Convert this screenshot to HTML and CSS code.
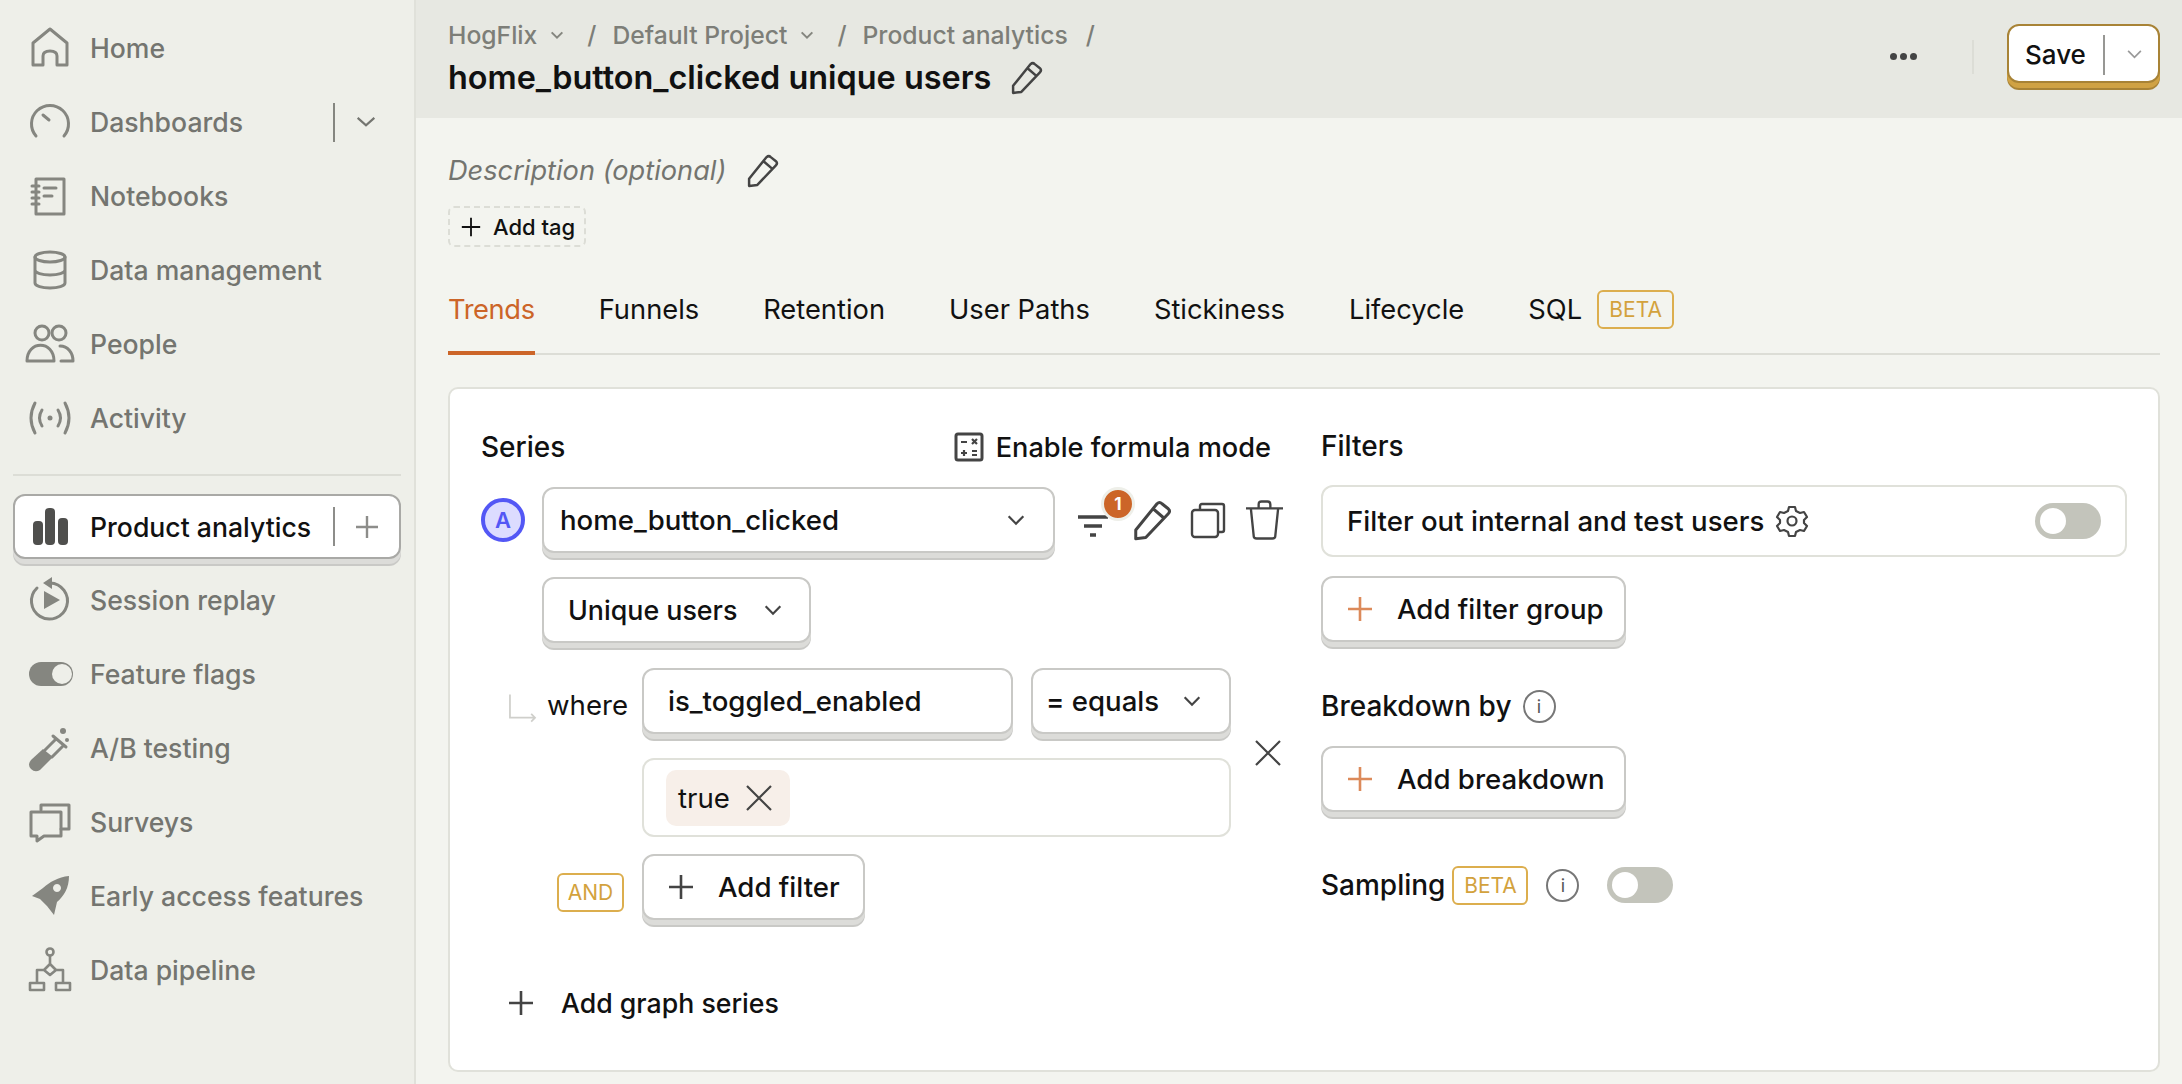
FILE: index.html
```html
<!DOCTYPE html>
<html lang="en">
<head>
    <meta charset="UTF-8">
    <title>home_button_clicked unique users</title>
    <link rel="stylesheet" href="styles.css">
</head>
<body>
    <aside class="sidebar">
        <nav class="nav-group">
            <a class="nav-item"><svg class="nav-icon" viewBox="0 0 44 44"><path d="M5 39V17L22 3l17 14v22H29V30q0-5-7-5t-7 5v9z"/></svg>Home</a>
            <a class="nav-item"><svg class="nav-icon" viewBox="0 0 44 44"><path d="M8 36A18.5 18.5 0 1 1 36 36M15 15l6 5"/></svg>Dashboards<span class="nav-split"></span><svg class="nav-chevron" viewBox="0 0 24 24"><path d="M2 7l10 9 10-9"/></svg></a>
            <a class="nav-item"><svg class="nav-icon" viewBox="0 0 44 44"><path d="M8 5h28v35H8zM4 12h7M4 18h7M4 24h7M4 30h7M16 14h12M16 22h8"/></svg>Notebooks</a>
            <a class="nav-item"><svg class="nav-icon" viewBox="0 0 44 44"><ellipse cx="22" cy="9" rx="15" ry="5"/><path d="M7 9v26c0 3 7 5 15 5s15-2 15-5V9M7 22c0 3 7 5 15 5s15-2 15-5"/></svg>Data management</a>
            <a class="nav-item"><svg class="nav-icon" viewBox="0 0 44 44"><circle cx="14" cy="11" r="7"/><circle cx="31" cy="11" r="7"/><path d="M-1 39c0-21 27-21 27 0zM32 24c8 0 13 7 13 15H33"/></svg>People</a>
            <a class="nav-item"><svg class="nav-icon" viewBox="0 0 44 44"><path d="M14 14q-5 8 0 16M30 14q5 8 0 16M7 7q-8 15 0 30M37 7q8 15 0 30"/><circle class="fill" cx="22" cy="22" r="2.5"/></svg>Activity</a>
        </nav>
        <div class="nav-divider"></div>
        <a class="nav-active">
            <svg class="bars" viewBox="0 0 44 44"><rect x="5" y="16" width="10" height="24" rx="4"/><rect x="17" y="3" width="10" height="37" rx="4"/><rect x="30" y="13" width="10" height="27" rx="4"/></svg>
            Product analytics<span class="nav-split"></span>
            <svg class="nav-plus" viewBox="0 0 24 24"><path d="M12 1v22M1 12h22"/></svg>
        </a>
        <nav class="nav-group">
            <a class="nav-item"><svg class="nav-icon" viewBox="0 0 44 44"><path d="M22 5A18 18 0 1 1 9 10"/><path class="fill" d="M24-1l-9 6 9 6zM16 13l16 9-16 9z"/></svg>Session replay</a>
            <a class="nav-item"><svg class="nav-icon" viewBox="0 0 44 44"><rect class="fill" x="1" y="10" width="44" height="24" rx="12"/><circle class="knob" cx="34" cy="22" r="10"/></svg>Feature flags</a>
            <a class="nav-item"><svg class="nav-icon" viewBox="0 0 44 44"><path d="M25 10L38 21M28 13L17 24M35 20L24 31"/><path class="fill" d="M15 23L25 31 12 44q-5 3-9-1t0-9z"/><circle class="fill" cx="35" cy="5" r="3"/><circle class="fill" cx="39" cy="14" r="2"/></svg>A/B testing</a>
            <a class="nav-item"><svg class="nav-icon" viewBox="0 0 44 44"><path d="M13 10V5h28v24h-8"/><path d="M3 12h30v24H16l-7 5v-5H3z"/></svg>Surveys</a>
            <a class="nav-item"><svg class="nav-icon" viewBox="0 0 44 44"><path class="fill" fill-rule="evenodd" d="M41 2c0 12-5 20-12 26l-3 13-7-9-7-7-8-3 11-8C22 8 30 3 41 2zM29 10a4 4 0 1 0 .01 0z"/></svg>Early access features</a>
            <a class="nav-item"><svg class="nav-icon thin" viewBox="0 0 44 44"><circle cx="22" cy="4" r="3.5"/><path d="M22 8v8l-6 6 6 5 6-5-6-6M16 22H9v13M28 22h7v13M2 35h14v7H2zM28 35h14v7H28z"/></svg>Data pipeline</a>
        </nav>
    </aside>

    <main class="main">
        <header class="top-bar">
            <div>
                <div class="crumbs">
                    <span>HogFlix</span><svg class="crumb-chev" viewBox="0 0 24 24"><path d="M4 8l8 8 8-8"/></svg>
                    <span class="slash">/</span>
                    <span>Default Project</span><svg class="crumb-chev" viewBox="0 0 24 24"><path d="M4 8l8 8 8-8"/></svg>
                    <span class="slash">/</span>
                    <span>Product analytics</span>
                    <span class="slash last">/</span>
                </div>
                <h1 class="title">home_button_clicked unique users <svg class="pencil" viewBox="0 0 32 32"><path d="M3 24L20 3q2-2 4 0l5 4q2 2 0 4L11 30l-8 1zM17 7l8 7"/></svg></h1>
            </div>
            <div class="top-actions">
                <div class="dots"><i></i><i></i><i></i></div>
                <div class="top-sep"></div>
                <div class="save-btn">Save<span class="save-split"></span><svg class="save-chev" viewBox="0 0 24 24"><path d="M3 7l9 9 9-9"/></svg></div>
            </div>
        </header>

        <div class="content">
            <div class="desc">Description (optional) <svg class="pencil" viewBox="0 0 32 32"><path d="M3 24L20 3q2-2 4 0l5 4q2 2 0 4L11 30l-8 1zM17 7l8 7"/></svg></div>
            <div class="add-tag"><svg class="tag-plus" viewBox="0 0 24 24"><path d="M12 2v20M2 12h20"/></svg>Add tag</div>

            <div class="tabs">
                <span class="tab active">Trends</span>
                <span class="tab">Funnels</span>
                <span class="tab">Retention</span>
                <span class="tab">User Paths</span>
                <span class="tab">Stickiness</span>
                <span class="tab">Lifecycle</span>
                <span class="tab">SQL <em class="beta">BETA</em></span>
            </div>

            <section class="card">
                <div class="col-left">
                    <div class="series-head">
                        <span class="label">Series</span>
                        <span class="formula"><svg class="calc" viewBox="0 0 30 30"><rect x="2" y="2" width="26" height="26" rx="2"/><path d="M7 10h6M18 7l5 5M23 7l-5 5M7 21h6M10 18v6M18 19h5M18 23h5"/></svg>Enable formula mode</span>
                    </div>
                    <div class="row series-row">
                        <span class="letter">A</span>
                        <div class="btn event-select">home_button_clicked<svg class="chev" viewBox="0 0 24 24"><path d="M4 8l8 8 8-8"/></svg></div>
                        <div class="series-tools">
                            <span class="filter-tool"><svg class="tool-filter" viewBox="0 0 30 24"><path d="M0 3h30M6 12h18M12 21h6"/></svg><b class="badge">1</b></span>
                            <svg class="tool tool-pencil" viewBox="0 0 32 32"><path d="M3 24L20 3q2-2 4 0l5 4q2 2 0 4L11 30l-8 1zM17 7l8 7"/></svg>
                            <svg class="tool tool-copy" viewBox="0 0 36 36"><path d="M10 7V4q0-2 2-2h20q2 0 2 2v24q0 2-2 2h-3"/><rect x="2" y="8" width="26" height="27" rx="3"/></svg>
                            <svg class="tool tool-trash" viewBox="0 0 40 40"><path d="M1 8h38M14 8V4q0-3 3-3h6q3 0 3 3v4M6 8l3 29q0 2 3 2h16q3 0 3-2l3-29"/></svg>
                        </div>
                    </div>
                    <div class="btn math-select">Unique users<svg class="chev" viewBox="0 0 24 24"><path d="M4 8l8 8 8-8"/></svg></div>

                    <div class="where-wrap">
                        <div class="where-fields">
                            <div class="row where-row">
                                <svg class="where-arrow" viewBox="0 0 28 30"><path d="M1 0v24h26M23 20l4 4-4 4"/></svg>
                                <span class="where-label">where</span>
                                <div class="btn prop-select">is_toggled_enabled</div>
                                <div class="btn op-select">= equals<svg class="chev" viewBox="0 0 24 24"><path d="M4 8l8 8 8-8"/></svg></div>
                            </div>
                            <div class="value-box"><span class="chip">true<svg class="x-icon" viewBox="0 0 28 28"><path d="M2 2l24 24M26 2L2 26"/></svg></span></div>
                        </div>
                        <svg class="x-icon where-close" viewBox="0 0 28 28"><path d="M2 2l24 24M26 2L2 26"/></svg>
                    </div>

                    <div class="row and-row">
                        <span class="and-tag">AND</span>
                        <div class="btn add-btn filter-btn"><svg class="plus" viewBox="0 0 24 24"><path d="M12 0v24M0 12h24"/></svg>Add filter</div>
                    </div>
                    <div class="add-series"><svg class="plus" viewBox="0 0 24 24"><path d="M12 0v24M0 12h24"/></svg>Add graph series</div>
                </div>

                <div class="col-right">
                    <div class="label filters-label">Filters</div>
                    <div class="test-box">
                        <span>Filter out internal and test users</span>
                        <svg class="gear" viewBox="0 0 32 32"><path d="M13 2h6l1 4 4 2 4-1 3 5-3 3v3l3 3-3 5-4-1-4 2-1 4h-6l-1-4-4-2-4 1-3-5 3-3v-3L1 12l3-5 4 1 4-2z"/><circle cx="16" cy="16" r="4.5"/></svg>
                        <span class="toggle test-toggle"></span>
                    </div>
                    <div class="btn add-btn wide-btn"><svg class="plus orange" viewBox="0 0 24 24"><path d="M12 0v24M0 12h24"/></svg>Add filter group</div>
                    <div class="label-row breakdown-label"><span class="label">Breakdown by</span><span class="info">i</span></div>
                    <div class="btn add-btn wide-btn"><svg class="plus orange" viewBox="0 0 24 24"><path d="M12 0v24M0 12h24"/></svg>Add breakdown</div>
                    <div class="label-row sampling-row">
                        <span class="label">Sampling</span>
                        <em class="beta">BETA</em>
                        <span class="info">i</span>
                        <span class="toggle"></span>
                    </div>
                </div>
            </section>
        </div>
    </main>
</body>
</html>
```

FILE: styles.css
```css
/* General */
* {
    box-sizing: border-box;
}

html, body {
    height: 1084px;
    overflow: hidden;
}

body {
    margin: 0;
    display: flex;
    font-family: 'Inter', sans-serif;
    font-size: 27.6px;
    color: #111;
    background-color: #f3f4ef;
}

svg {
    fill: none;
    stroke: currentColor;
    overflow: visible;
    flex-shrink: 0;
}

/* Sidebar */
.sidebar {
    width: 416px;
    flex-shrink: 0;
    background-color: #eeefe9;
    border-right: 2px solid #e0e1da;
    padding: 11px 13px 0;
    font-size: 26.6px;
}

.nav-item {
    display: flex;
    align-items: center;
    height: 74px;
    padding-left: 15px;
    font-weight: 500;
    color: #747570;
}

.nav-icon {
    width: 44px;
    height: 44px;
    margin-right: 18px;
    stroke: #858680;
    stroke-width: 3;
    stroke-linecap: round;
    stroke-linejoin: round;
}

.nav-icon.thin {
    stroke-width: 2.6;
}

.nav-icon .fill {
    fill: #858680;
    stroke: none;
}

.nav-icon .knob {
    fill: #eeefe9;
    stroke: none;
}

.nav-split {
    width: 2px;
    height: 39px;
    margin-left: auto;
    background-color: #858680;
}

.nav-chevron {
    width: 20px;
    height: 20px;
    margin: 0 25px 0 21px;
    stroke: #747570;
    stroke-width: 2.6;
}

.nav-divider {
    height: 2px;
    margin: 19px 0 18px;
    background-color: #dcddd6;
}

.nav-active {
    display: flex;
    align-items: center;
    height: 65px;
    margin-bottom: 4px;
    padding-left: 13px;
    background-color: #fff;
    border: 2px solid #a9a9a6;
    border-radius: 12px;
    box-shadow: 0 5px 0 0 #dcdcd9, 0 7px 0 0 #c9c9c6;
    font-weight: 500;
    color: #111;
}

.bars {
    width: 44px;
    height: 44px;
    margin-right: 18px;
    fill: #4f4f4d;
    stroke: none;
}

.nav-active .nav-split {
    background-color: #8d8d8a;
}

.nav-plus {
    width: 24px;
    height: 24px;
    margin: 0 20px 0 20px;
    stroke: #8d8d8a;
    stroke-width: 2.4;
}

/* Main */
.main {
    flex: 1;
    min-width: 0;
}

.top-bar {
    display: flex;
    justify-content: space-between;
    height: 118px;
    padding: 16px 22px 0 32px;
    background-color: #e7e8e2;
}

.crumbs {
    display: flex;
    align-items: center;
    height: 38px;
    font-size: 24.7px;
    font-weight: 500;
    color: #7d7e78;
}

.crumb-chev {
    width: 16px;
    height: 16px;
    margin-left: 12px;
    stroke-width: 3;
    stroke: #85867f;
}

.slash {
    margin: 0 16px 0 22px;
}

.slash.last {
    margin-left: 18px;
}

.title {
    display: flex;
    align-items: center;
    height: 46px;
    margin: 0;
    font-size: 32.4px;
    font-weight: 600;
    white-space: pre;
}

.pencil {
    width: 33px;
    height: 33px;
    margin-left: 10px;
    stroke: #444;
    stroke-width: 2.4;
    stroke-linejoin: round;
}

.top-actions {
    display: flex;
    align-items: flex-start;
}

.dots {
    display: flex;
    gap: 3px;
    margin: 37px 0 0;
}

.dots i {
    width: 7px;
    height: 7px;
    border-radius: 50%;
    background-color: #444;
}

.top-sep {
    width: 2px;
    height: 34px;
    margin: 24px 33px 0 55px;
    background-color: #dcddd6;
}

.save-btn {
    display: flex;
    align-items: center;
    width: 153px;
    height: 59px;
    margin-top: 8px;
    padding: 2px 0 0 16px;
    background-color: #fff;
    border: 2px solid #a88336;
    border-radius: 12px;
    box-shadow: 0 5px 0 0 #d0a244, 0 7px 0 0 #a88336;
    font-size: 26px;
    font-weight: 500;
}

.save-split {
    width: 2px;
    height: 40px;
    margin: 0 21px 0 17px;
    background-color: #979794;
}

.save-chev {
    width: 17px;
    height: 17px;
    stroke: #999;
    stroke-width: 2.4;
}

/* Content */
.content {
    padding: 32px 22px 0 32px;
}

.desc {
    display: flex;
    align-items: center;
    height: 40px;
    font-size: 27.2px;
    font-style: italic;
    color: #73746f;
}

.desc .pencil {
    margin-left: 20px;
}

.add-tag {
    display: flex;
    align-items: center;
    width: 138px;
    height: 41px;
    margin-top: 16px;
    padding-left: 10px;
    border: 2px dashed #dcddd6;
    border-radius: 6px;
    font-size: 22px;
    font-weight: 500;
}

.tag-plus {
    width: 22px;
    height: 22px;
    margin-right: 11px;
    stroke-width: 2;
}

.tabs {
    display: flex;
    gap: 64px;
    height: 72px;
    margin-top: 36px;
    border-bottom: 2px solid #dcddd6;
    font-size: 27.3px;
}

.tab {
    display: flex;
    align-items: center;
    height: 72px;
    padding-bottom: 20px;
}

.tab.active {
    padding-bottom: 16px;
    letter-spacing: -0.4px;
    color: #cc6528;
    border-bottom: 4px solid #cc6528;
}

.beta {
    display: inline-flex;
    align-items: center;
    justify-content: center;
    width: 77px;
    height: 39px;
    margin-left: 15px;
    border: 2px solid #dcae4e;
    border-radius: 6px;
    font-size: 21px;
    font-style: normal;
    color: #d3a23d;
}

/* Card */
.card {
    display: flex;
    height: 685px;
    margin-top: 32px;
    padding: 38px 31px 0;
    background-color: #fff;
    border: 2px solid #e0e1da;
    border-radius: 10px;
}

.col-left {
    width: 840px;
    flex-shrink: 0;
}

.col-right {
    flex: 1;
}

.label {
    font-size: 28px;
    font-weight: 500;
}

.series-head {
    display: flex;
    justify-content: space-between;
    align-items: center;
    width: 790px;
    height: 40px;
}

.formula {
    display: flex;
    align-items: center;
    font-size: 27.2px;
    font-weight: 500;
}

.calc {
    width: 30px;
    height: 30px;
    margin-right: 12px;
    stroke: #444;
    stroke-width: 2.2;
}

.calc rect {
    stroke-width: 3;
}

.row {
    display: flex;
    align-items: center;
}

.btn {
    display: flex;
    align-items: center;
    height: 66px;
    background-color: #fff;
    border: 2px solid #c9c9c6;
    border-radius: 12px;
    box-shadow: 0 5px 0 0 #dcdcd9, 0 7px 0 0 #c9c9c6;
    font-weight: 500;
}

.chev {
    width: 22px;
    height: 22px;
    margin-left: auto;
    stroke: #444;
    stroke-width: 2.4;
}

.series-row {
    margin-top: 20px;
}

.letter {
    display: flex;
    align-items: center;
    justify-content: center;
    width: 44px;
    height: 44px;
    margin-right: 17px;
    background-color: #dcdcff;
    border: 4px solid #5357f5;
    border-radius: 50%;
    font-size: 22px;
    font-weight: 600;
    color: #5357f5;
}

.event-select {
    width: 513px;
    padding: 0 26px 0 16px;
}

.series-tools {
    display: flex;
    align-items: center;
    margin-left: 23px;
}

.filter-tool {
    position: relative;
    display: flex;
    width: 30px;
    margin-top: 12px;
}

.tool-filter {
    width: 30px;
    height: 24px;
    stroke: #444;
    stroke-width: 3.4;
}

.badge {
    position: absolute;
    top: -27px;
    left: 23px;
    width: 34px;
    height: 34px;
    display: flex;
    align-items: center;
    justify-content: center;
    background-color: #cc6528;
    border: 3px solid #eeefe9;
    border-radius: 50%;
    font-size: 17px;
    font-weight: 700;
    color: #fff;
}

.tool {
    stroke: #444;
    stroke-width: 2.4;
    stroke-linejoin: round;
}

.tool-pencil {
    width: 40px;
    height: 40px;
    margin-left: 24px;
}

.tool-copy {
    width: 36px;
    height: 36px;
    margin-left: 18px;
}

.tool-trash {
    width: 39px;
    height: 40px;
    margin-left: 19px;
}

.math-select {
    width: 269px;
    margin: 24px 0 0 61px;
    padding: 0 25px 0 24px;
    font-size: 26.8px;
}

.where-wrap {
    display: flex;
    align-items: center;
    margin-top: 25px;
}

.where-fields {
    width: 750px;
}

.where-arrow {
    width: 27px;
    height: 30px;
    margin: 16px 11px 0 28px;
    stroke: #cfcfcb;
    stroke-width: 1.8;
}

.where-label {
    width: 95px;
    margin-top: 8px;
    font-weight: 400;
}

.prop-select {
    width: 371px;
    padding-left: 24px;
}

.op-select {
    width: 200px;
    margin-left: 18px;
    padding: 0 26px 0 13px;
}

.value-box {
    display: flex;
    align-items: center;
    width: 589px;
    height: 79px;
    margin: 24px 0 0 161px;
    padding-left: 22px;
    border: 2px solid #e0e1da;
    border-radius: 12px;
}

.chip {
    display: flex;
    align-items: center;
    width: 124px;
    height: 56px;
    padding-left: 12px;
    background-color: #f7efe9;
    border-radius: 10px;
    font-weight: 400;
}

.x-icon {
    width: 28px;
    height: 28px;
    margin-left: 15px;
    stroke: #444;
    stroke-width: 2.2;
}

.where-close {
    margin: 0 0 0 23px;
}

.and-row {
    margin-top: 17px;
}

.and-tag {
    display: flex;
    align-items: center;
    justify-content: center;
    width: 67px;
    height: 39px;
    margin: 10px 18px 0 76px;
    border: 2px solid #dcae4e;
    border-radius: 6px;
    font-size: 21px;
    color: #d3a23d;
}

.plus {
    width: 24px;
    height: 24px;
    stroke: #444;
    stroke-width: 2.6;
}

.plus.orange {
    stroke: #dc8a5a;
}

.add-btn .plus {
    margin-right: 25px;
}

.filter-btn {
    width: 223px;
    padding-left: 25px;
}

.add-series {
    display: flex;
    align-items: center;
    margin-top: 67px;
    padding-left: 28px;
    font-size: 26.7px;
    font-weight: 500;
}

.add-series .plus {
    margin-right: 28px;
}

.filters-label {
    height: 40px;
    line-height: 38px;
}

.test-box {
    display: flex;
    align-items: center;
    height: 72px;
    margin-top: 18px;
    padding: 0 24px;
    border: 2px solid #e0e1da;
    border-radius: 12px;
    font-weight: 500;
}

.gear {
    width: 32px;
    height: 32px;
    margin-left: 12px;
    stroke: #444;
    stroke-width: 2.2;
    stroke-linejoin: round;
}

.toggle {
    display: block;
    width: 66px;
    height: 36px;
    background-color: #c3c4bb;
    border-radius: 18px;
    position: relative;
}

.toggle::after {
    content: "";
    position: absolute;
    top: 5px;
    left: 5px;
    width: 26px;
    height: 26px;
    background-color: #fff;
    border-radius: 50%;
}

.test-toggle {
    margin-left: auto;
}

.wide-btn {
    width: 305px;
    margin-top: 19px;
    padding-left: 25px;
}

.label-row {
    display: flex;
    align-items: center;
}

.breakdown-label {
    height: 40px;
    margin-top: 44px;
}

.breakdown-label + .wide-btn {
    margin-top: 20px;
}

.info {
    display: flex;
    align-items: center;
    justify-content: center;
    width: 33px;
    height: 33px;
    margin-left: 11px;
    border: 2px solid #777;
    border-radius: 50%;
    font-size: 18px;
    font-weight: 400;
    color: #555;
}

.sampling-row {
    height: 40px;
    margin-top: 53px;
}

.sampling-row .beta {
    width: 76px;
    margin-left: 7px;
}

.sampling-row .info {
    margin-left: 18px;
}

.sampling-row .toggle {
    margin-left: 28px;
}
```
